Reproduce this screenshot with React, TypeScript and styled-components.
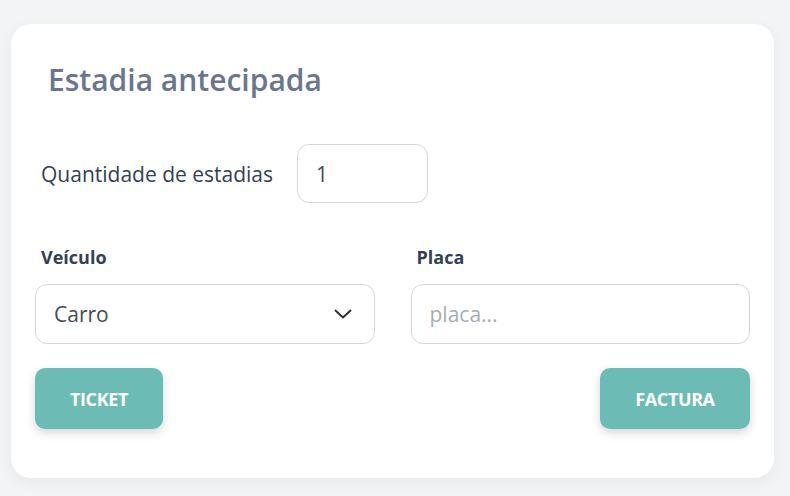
import React from 'react';
import styled, { createGlobalStyle } from 'styled-components';

const GlobalStyle = createGlobalStyle`
    body {
        margin: 0;
        background: #f3f4f6;
        font-family: "Open Sans", "Noto Sans", sans-serif;
    }
`

const Page = styled.div`
    padding: 24px 16px 19px 11px;
`

const Card = styled.div`
    background: #ffffff;
    border-radius: 20px;
    box-shadow: 0 4px 14px rgba(30, 41, 59, 0.06);
    padding: 34px 24px 49px 24px;
    display: flex;
    flex-direction: column;
`

const Title = styled.h2`
    margin: 0 0 0 13px;
    font-size: 30px;
    font-weight: 600;
    color: #6b7590;
    line-height: 44px;
`

const QuantityRow = styled.div`
    display: flex;
    align-items: center;
    gap: 24px;
    margin: 42px 0 0 6px;
`

const QuantityLabel = styled.span`
    font-size: 21px;
    color: #334155;
`

const Grid = styled.div`
    display: grid;
    grid-template-columns: 1fr 1fr;
    column-gap: 36px;
    margin-top: 40px;
`

const Field = styled.div`
    display: flex;
    flex-direction: column;
`

const FieldLabel = styled.label`
    font-size: 18px;
    font-weight: 700;
    color: #334155;
    margin-left: 6px;
    line-height: 28px;
    margin-bottom: 13px;
`

const Box = styled.div<{ $width?: number }>`
    box-sizing: border-box;
    height: ${p => (p.$width ? 59 : 60)}px;
    width: ${p => (p.$width ? `${p.$width}px` : '100%')};
    border: 1px solid #d4d6da;
    border-radius: 12px;
    background: #fff;
    display: flex;
    align-items: center;
    justify-content: space-between;
    padding: 0 22px 0 18px;
    font-size: 21px;
    color: #444b55;
`

const Placeholder = styled.span`
    color: #a9adb3;
`

const Actions = styled.div`
    display: flex;
    justify-content: space-between;
    margin-top: 24px;
`

const ActionButton = styled.button<{ $width: number }>`
    width: ${p => p.$width}px;
    height: 61px;
    border: none;
    border-radius: 10px;
    background: #6dbbb5;
    color: #ffffff;
    font-family: "Open Sans", "Noto Sans", sans-serif;
    font-size: 18px;
    font-weight: 700;
    letter-spacing: -0.4px;
    text-transform: uppercase;
    box-shadow: 0 4px 10px rgba(30, 41, 59, 0.18);
    cursor: pointer;
`

const Chevron = () => (
    <svg width="18" height="10" viewBox="0 0 18 10" fill="none" stroke="#2b2f36" strokeWidth="1.9" strokeLinecap="round" strokeLinejoin="round">
        <polyline points="1.5 1.5 9 8.5 16.5 1.5" />
    </svg>
)

export default function App() {
    return (
        <Page>
            <GlobalStyle />
            <Card>
                <Title>Estadia antecipada</Title>
                <QuantityRow>
                    <QuantityLabel>Quantidade de estadias</QuantityLabel>
                    <Box $width={131}>1</Box>
                </QuantityRow>
                <Grid>
                    <Field>
                        <FieldLabel>Veículo</FieldLabel>
                        <Box>
                            <span>Carro</span>
                            <Chevron />
                        </Box>
                    </Field>
                    <Field>
                        <FieldLabel>Placa</FieldLabel>
                        <Box>
                            <Placeholder>placa...</Placeholder>
                        </Box>
                    </Field>
                </Grid>
                <Actions>
                    <ActionButton $width={128}>Ticket</ActionButton>
                    <ActionButton $width={150}>Factura</ActionButton>
                </Actions>
            </Card>
        </Page>
    )
}
